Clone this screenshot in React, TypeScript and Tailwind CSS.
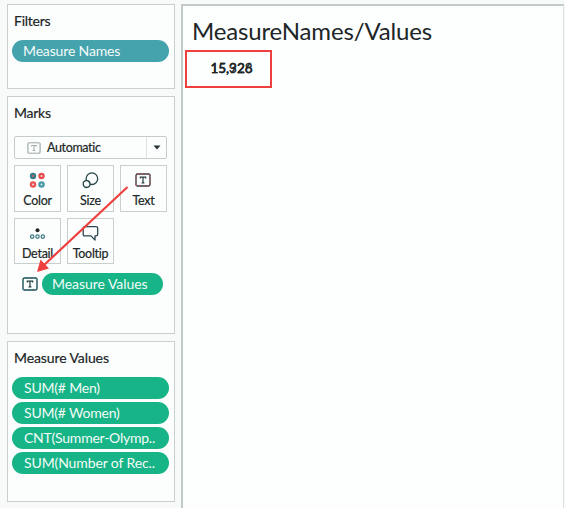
import React from "react";

function TextIcon({ className = "", color = "#243c40", accent = "#3f8d99", size = 16 }: { className?: string; color?: string; accent?: string; size?: number }) {
  return (
    <svg className={className} width={size} height={14} viewBox="0 0 16 14" fill="none">
      <rect x="1" y="1" width="14" height="12" rx="1.5" stroke={color} strokeWidth="1.3" />
      <rect x="1" y="1" width="14" height="12" rx="1.5" stroke={accent} strokeWidth="1.3" strokeDasharray="2 2" />
      <path d="M5.3 5.4V4.2h5.4v1.2M8 4.2v5.6M6.6 9.8h2.8" stroke={color} strokeWidth="1.2" />
    </svg>
  );
}

function ColorIcon() {
  const dots = [
    [4, 4, "#347e88"],
    [12.5, 4, "#e94b4b"],
    [4, 12.5, "#ec5050"],
    [12.5, 12.5, "#4699a6"],
  ] as const;
  return (
    <svg width="17" height="17" viewBox="0 0 17 17">
      {dots.map(([x, y, c]) => (
        <g key={`${x}-${y}`}>
          <circle cx={x} cy={y} r="3.2" fill={c} />
          <circle cx={x} cy={y} r="0.9" fill="#e8f0ef" />
        </g>
      ))}
      <circle cx="4" cy="4" r="1.1" fill="#c34b50" />
    </svg>
  );
}

function SizeIcon() {
  return (
    <svg width="17" height="17" viewBox="0 0 17 17" fill="#fcfefd" stroke="#29464b" strokeWidth="1.3">
      <circle cx="9.9" cy="6.7" r="5.8" />
      <circle cx="4.6" cy="12.1" r="3.4" />
    </svg>
  );
}

function DetailIcon() {
  return (
    <svg width="17" height="17" viewBox="0 0 17 17" fill="none" stroke="#3d7882" strokeWidth="1.2">
      <circle cx="8.5" cy="5.2" r="2" fill="#20282a" stroke="none" />
      <circle cx="3.2" cy="11.6" r="1.7" />
      <circle cx="8.5" cy="11.6" r="1.7" />
      <circle cx="13.8" cy="11.6" r="1.7" />
    </svg>
  );
}

function TooltipIcon() {
  return (
    <svg width="17" height="17" viewBox="0 0 17 17" fill="none" stroke="#29464b" strokeWidth="1.3" strokeLinejoin="round">
      <path d="M2.7 1.7h11.2q1.8 0 1.8 1.6v6q0 1.6-1.8 1.6h-.9v4.2l-4-4.2H2.7q-1.5 0-1.5-1.6v-6q0-1.6 1.5-1.6z" />
    </svg>
  );
}

function MarkButton({ label, children, short = false }: { label: string; children: React.ReactNode; short?: boolean }) {
  return (
    <div className={`flex w-[47px] shrink-0 flex-col items-center border border-[#c8d0ce] bg-[#fcfefd] pt-[5px] ${short ? "h-[46px]" : "h-[47px]"}`}>
      <div className="flex h-[18px] items-center justify-center">{children}</div>
      <span className="mt-[4px] text-[12.5px] leading-[16px] tracking-[-0.25px] whitespace-nowrap [-webkit-text-stroke:0.2px_#202627]">{label}</span>
    </div>
  );
}

function Pill({ label, className = "" }: { label: string; className?: string }) {
  return (
    <div className={`flex h-[22px] items-center rounded-full text-[14px] leading-none whitespace-nowrap text-[#f4fbf9] ${className}`}>
      {label}
    </div>
  );
}

function Heading({ children, className = "" }: { children: React.ReactNode; className?: string }) {
  return (
    <h2 className={`text-[14px] leading-[18px] [-webkit-text-stroke:0.2px_#202627] ${className}`}>{children}</h2>
  );
}

const measures = [
  { label: "SUM(# Men)", spacing: "tracking-[-0.2px]" },
  { label: "SUM(# Women)", spacing: "tracking-[-0.2px]" },
  { label: "CNT(Summer-Olymp..", spacing: "tracking-[-0.24px]" },
  { label: "SUM(Number of Rec..", spacing: "tracking-[-0.12px]" },
];

export default function App() {
  return (
    <div className="relative flex h-[508px] w-[565px] overflow-hidden bg-[#f8faf9] pt-[4px] pl-[7px] font-['Lato','Liberation_Sans',sans-serif] text-[#202627]">
      <aside className="flex w-[168px] shrink-0 flex-col gap-[7px]">
        <section className="h-[85px] border border-[#c8cfcd] bg-[#fcfefd] pt-[7px] pr-[5px] pl-[4px]">
          <Heading className="pl-[2px] tracking-[-0.25px]">Filters</Heading>
          <Pill label="Measure Names" className="mt-[10px] bg-[#45a3ae] pl-[11px] tracking-[-0.15px]" />
        </section>

        <section className="h-[238px] border border-[#c8cfcd] bg-[#fcfefd] px-[6px] pt-[7px]">
          <Heading className="tracking-[-0.25px]">Marks</Heading>
          <div className="mt-[14px] flex h-[23px] w-[153px] items-center rounded-[2px] border border-[#c5cccb] bg-[#fcfefd]">
            <TextIcon className="ml-[12px]" size={14} color="#a3adad" accent="#b5c0c0" />
            <span className="ml-[6px] text-[12.5px] leading-[16px] tracking-[-0.35px] [-webkit-text-stroke:0.2px_#202627]">Automatic</span>
            <div className="ml-auto flex h-full w-[20px] items-center justify-center border-l border-[#dce1df]">
              <svg width="8" height="5" viewBox="0 0 8 5"><path d="M.5.5h7L4 4.5z" fill="#273336" /></svg>
            </div>
          </div>
          <div className="mt-[6px] flex gap-[6px]">
            <MarkButton label="Color"><ColorIcon /></MarkButton>
            <MarkButton label="Size"><SizeIcon /></MarkButton>
            <MarkButton label="Text"><TextIcon className="-ml-[2px]" accent="#b0585d" /></MarkButton>
          </div>
          <div className="mt-[6px] flex gap-[6px]">
            <MarkButton label="Detail" short><DetailIcon /></MarkButton>
            <MarkButton label="Tooltip" short><TooltipIcon /></MarkButton>
          </div>
          <div className="mt-[9px] flex items-center pl-[8px]">
            <TextIcon />
            <Pill label="Measure Values" className="ml-[4px] w-[121px] bg-[#16b486] pl-[10px] tracking-[-0.05px]" />
          </div>
        </section>

        <section className="h-[161px] border border-[#c8cfcd] bg-[#fcfefd] pt-[7px] pr-[5px] pl-[4px]">
          <Heading className="pl-[2px] tracking-[-0.1px]">Measure Values</Heading>
          <div className="mt-[10px] flex flex-col gap-[3px]">
            {measures.map((m) => (
              <Pill key={m.label} label={m.label} className={`bg-[#16b486] pl-[12px] ${m.spacing}`} />
            ))}
          </div>
        </section>
      </aside>

      <main className="ml-[6px] h-[504px] w-[383px] shrink-0 border-t-2 border-r border-l-2 border-t-[#c3cbc9] border-r-[#dce1df] border-l-[#c3cbc9] bg-[#fdfefe]">
        <h1 className="pt-[10px] pl-[9px] text-[24px] leading-[30px] tracking-[-0.16px] whitespace-nowrap">MeasureNames/Values</h1>
        <div className="mt-[4px] ml-[2px] flex h-[38px] w-[87px] items-center justify-center border-2 border-[#ef4040]">
          <div className="relative -top-px left-[3px] grid text-[13.5px] leading-[18px] [-webkit-text-stroke:0.3px_#202627]">
            <span className="col-start-1 row-start-1">15,328</span>
            <span className="col-start-1 row-start-1">15,926</span>
          </div>
        </div>
      </main>

      <svg className="pointer-events-none absolute top-0 left-0" width="180" height="290" viewBox="0 0 180 290">
        <path d="M127.5 187L43 266" stroke="#ef4040" strokeWidth="2.2" />
        <path d="M37 272L40.5 259.5L49 268.5z" fill="#ef4040" />
      </svg>
    </div>
  );
}
